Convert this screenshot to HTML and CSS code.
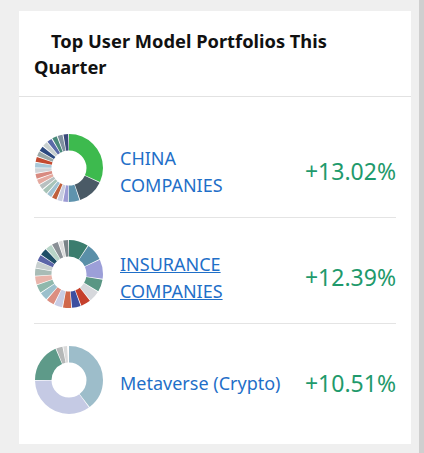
FILE: index.html
```html
<!DOCTYPE html>
<html>
<head>
<meta charset="utf-8">
<link rel="stylesheet" href="styles.css">
</head>
<body>
<div class="page">
  <div class="card">
    <div class="card-header">
      <h2 class="title">Top User Model Portfolios This Quarter</h2>
    </div>
    <ul class="list">
      <li class="row">
        <svg class="donut" width="68" height="68" viewBox="0 0 68 68">
          <g transform="rotate(-90 34 34)" fill="none" stroke-width="16.5">
            <circle cx="34" cy="34" r="25.75" pathLength="360" stroke="#3dba4e" stroke-dasharray="114.5 360" stroke-dashoffset="0"/>
            <circle cx="34" cy="34" r="25.75" pathLength="360" stroke="#4a5a66" stroke-dasharray="44.5 360" stroke-dashoffset="-116"/>
            <circle cx="34" cy="34" r="25.75" pathLength="360" stroke="#5f93ad" stroke-dasharray="18.5 360" stroke-dashoffset="-162"/>
            <circle cx="34" cy="34" r="25.75" pathLength="360" stroke="#9c9ad4" stroke-dasharray="8.2 360" stroke-dashoffset="-182"/>
            <circle cx="34" cy="34" r="25.75" pathLength="360" stroke="#c8cde0" stroke-dasharray="8.2 360" stroke-dashoffset="-191.9"/>
            <circle cx="34" cy="34" r="25.75" pathLength="360" stroke="#c0603c" stroke-dasharray="8.2 360" stroke-dashoffset="-201.8"/>
            <circle cx="34" cy="34" r="25.75" pathLength="360" stroke="#a0c0d0" stroke-dasharray="8.2 360" stroke-dashoffset="-211.7"/>
            <circle cx="34" cy="34" r="25.75" pathLength="360" stroke="#a8c4b8" stroke-dasharray="8.2 360" stroke-dashoffset="-221.6"/>
            <circle cx="34" cy="34" r="25.75" pathLength="360" stroke="#b8c0c0" stroke-dasharray="8.2 360" stroke-dashoffset="-231.5"/>
            <circle cx="34" cy="34" r="25.75" pathLength="360" stroke="#e4aaa0" stroke-dasharray="8.2 360" stroke-dashoffset="-241.4"/>
            <circle cx="34" cy="34" r="25.75" pathLength="360" stroke="#d88a80" stroke-dasharray="8.2 360" stroke-dashoffset="-251.3"/>
            <circle cx="34" cy="34" r="25.75" pathLength="360" stroke="#d0d4d8" stroke-dasharray="8.2 360" stroke-dashoffset="-261.2"/>
            <circle cx="34" cy="34" r="25.75" pathLength="360" stroke="#a8c8d8" stroke-dasharray="8.2 360" stroke-dashoffset="-271.1"/>
            <circle cx="34" cy="34" r="25.75" pathLength="360" stroke="#c44a30" stroke-dasharray="8.2 360" stroke-dashoffset="-281"/>
            <circle cx="34" cy="34" r="25.75" pathLength="360" stroke="#9aa8a8" stroke-dasharray="8.2 360" stroke-dashoffset="-290.9"/>
            <circle cx="34" cy="34" r="25.75" pathLength="360" stroke="#2d4a80" stroke-dasharray="8.2 360" stroke-dashoffset="-300.8"/>
            <circle cx="34" cy="34" r="25.75" pathLength="360" stroke="#c8d0d0" stroke-dasharray="8.2 360" stroke-dashoffset="-310.7"/>
            <circle cx="34" cy="34" r="25.75" pathLength="360" stroke="#5a6aa8" stroke-dasharray="8.2 360" stroke-dashoffset="-320.6"/>
            <circle cx="34" cy="34" r="25.75" pathLength="360" stroke="#4a8a7a" stroke-dasharray="8.2 360" stroke-dashoffset="-330.5"/>
            <circle cx="34" cy="34" r="25.75" pathLength="360" stroke="#8090a0" stroke-dasharray="8.2 360" stroke-dashoffset="-340.4"/>
            <circle cx="34" cy="34" r="25.75" pathLength="360" stroke="#3a4a7a" stroke-dasharray="8.2 360" stroke-dashoffset="-350.3"/>
          </g>
        </svg>
        <a class="name" href="#">CHINA COMPANIES</a>
        <span class="pct">+13.02%</span>
      </li>
      <li class="row">
        <svg class="donut" width="68" height="68" viewBox="0 0 68 68">
          <g transform="rotate(-90 34 34)" fill="none" stroke-width="16.5">
            <circle cx="34" cy="34" r="25.75" pathLength="360" stroke="#3b7d6e" stroke-dasharray="33.5 360" stroke-dashoffset="0"/>
            <circle cx="34" cy="34" r="25.75" pathLength="360" stroke="#5a8fa8" stroke-dasharray="28.5 360" stroke-dashoffset="-35"/>
            <circle cx="34" cy="34" r="25.75" pathLength="360" stroke="#9c9fd8" stroke-dasharray="33.5 360" stroke-dashoffset="-65"/>
            <circle cx="34" cy="34" r="25.75" pathLength="360" stroke="#5a9684" stroke-dasharray="20.5 360" stroke-dashoffset="-100"/>
            <circle cx="34" cy="34" r="25.75" pathLength="360" stroke="#d6d8dc" stroke-dasharray="18.5 360" stroke-dashoffset="-122"/>
            <circle cx="34" cy="34" r="25.75" pathLength="360" stroke="#c5402c" stroke-dasharray="16.5 360" stroke-dashoffset="-142"/>
            <circle cx="34" cy="34" r="25.75" pathLength="360" stroke="#3c4ea0" stroke-dasharray="14.5 360" stroke-dashoffset="-160"/>
            <circle cx="34" cy="34" r="25.75" pathLength="360" stroke="#d0684c" stroke-dasharray="14.5 360" stroke-dashoffset="-176"/>
            <circle cx="34" cy="34" r="25.75" pathLength="360" stroke="#c8cce4" stroke-dasharray="13.5 360" stroke-dashoffset="-192"/>
            <circle cx="34" cy="34" r="25.75" pathLength="360" stroke="#dc8e80" stroke-dasharray="13.5 360" stroke-dashoffset="-207"/>
            <circle cx="34" cy="34" r="25.75" pathLength="360" stroke="#9cc0cc" stroke-dasharray="13.5 360" stroke-dashoffset="-222"/>
            <circle cx="34" cy="34" r="25.75" pathLength="360" stroke="#8fb8ac" stroke-dasharray="13.5 360" stroke-dashoffset="-237"/>
            <circle cx="34" cy="34" r="25.75" pathLength="360" stroke="#e8b4aa" stroke-dasharray="13.5 360" stroke-dashoffset="-252"/>
            <circle cx="34" cy="34" r="25.75" pathLength="360" stroke="#a8bcb6" stroke-dasharray="12.5 360" stroke-dashoffset="-267"/>
            <circle cx="34" cy="34" r="25.75" pathLength="360" stroke="#c8d0d0" stroke-dasharray="10.5 360" stroke-dashoffset="-281"/>
            <circle cx="34" cy="34" r="25.75" pathLength="360" stroke="#5a64a8" stroke-dasharray="10.5 360" stroke-dashoffset="-293"/>
            <circle cx="34" cy="34" r="25.75" pathLength="360" stroke="#1e4e66" stroke-dasharray="11.5 360" stroke-dashoffset="-305"/>
            <circle cx="34" cy="34" r="25.75" pathLength="360" stroke="#b8d4c8" stroke-dasharray="10.5 360" stroke-dashoffset="-318"/>
            <circle cx="34" cy="34" r="25.75" pathLength="360" stroke="#8a9096" stroke-dasharray="10.5 360" stroke-dashoffset="-330"/>
            <circle cx="34" cy="34" r="25.75" pathLength="360" stroke="#dcdcdc" stroke-dasharray="6.5 360" stroke-dashoffset="-342"/>
            <circle cx="34" cy="34" r="25.75" pathLength="360" stroke="#7a8488" stroke-dasharray="8.5 360" stroke-dashoffset="-350"/>
          </g>
        </svg>
        <a class="name underline" href="#">INSURANCE COMPANIES</a>
        <span class="pct">+12.39%</span>
      </li>
      <li class="row">
        <svg class="donut" width="68" height="68" viewBox="0 0 68 68">
          <g transform="rotate(-90 34 34)" fill="none" stroke-width="16.5">
            <circle cx="34" cy="34" r="25.75" pathLength="360" stroke="#9dbdca" stroke-dasharray="142.5 360" stroke-dashoffset="0"/>
            <circle cx="34" cy="34" r="25.75" pathLength="360" stroke="#c5cae4" stroke-dasharray="124.5 360" stroke-dashoffset="-144"/>
            <circle cx="34" cy="34" r="25.75" pathLength="360" stroke="#5e9a89" stroke-dasharray="66.5 360" stroke-dashoffset="-270"/>
            <circle cx="34" cy="34" r="25.75" pathLength="360" stroke="#b5b8b8" stroke-dasharray="10.5 360" stroke-dashoffset="-338"/>
            <circle cx="34" cy="34" r="25.75" pathLength="360" stroke="#dadada" stroke-dasharray="6.5 360" stroke-dashoffset="-350"/>
          </g>
        </svg>
        <a class="name" href="#">Metaverse (Crypto)</a>
        <span class="pct">+10.51%</span>
      </li>
    </ul>
  </div>
  <div class="scrollbar"></div>
</div>
</body>
</html>
```

FILE: styles.css
```css
html, body {
  margin: 0;
  padding: 0;
  background: #efefef;
  font-family: "Segoe UI", "Noto Sans", "Open Sans", sans-serif;
}

.page {
  display: flex;
  height: 453px;
  overflow: hidden;
}

.card {
  margin: 11px 0 0 19px;
  width: 392px;
  height: 433px;
  background: #ffffff;
  box-sizing: border-box;
}

.card-header {
  padding: 17px 15px 16px 15px;
  border-bottom: 1px solid #e2e2e2;
}

.title {
  margin: 0;
  font-size: 18.3px;
  font-weight: 700;
  line-height: 26px;
  color: #111;
  width: 300px;
  text-indent: 17px;
}

.list {
  list-style: none;
  margin: 0;
  padding: 15px 15px 0 15px;
}

.row {
  display: flex;
  align-items: center;
  height: 98px;
  padding-top: 7px;
  border-bottom: 1px solid #e4e4e4;
}

.row:last-child {
  border-bottom: none;
}

.donut {
  flex: none;
  display: block;
  margin-left: 1px;
}

.name {
  margin-left: 17px;
  margin-right: auto;
  padding-top: 7px;
  flex: 0 0 161.5px;
  font-size: 18px;
  line-height: 27px;
  color: #1f6fc8;
  text-decoration: none;
}

.name.underline {
  text-decoration: underline;
}

.pct {
  padding-top: 5px;
  font-size: 23px;
  color: #1f9a6c;
  white-space: nowrap;
}

.scrollbar {
  margin-left: auto;
  width: 5px;
  height: 453px;
  background: #cfcfcf;
}
```
